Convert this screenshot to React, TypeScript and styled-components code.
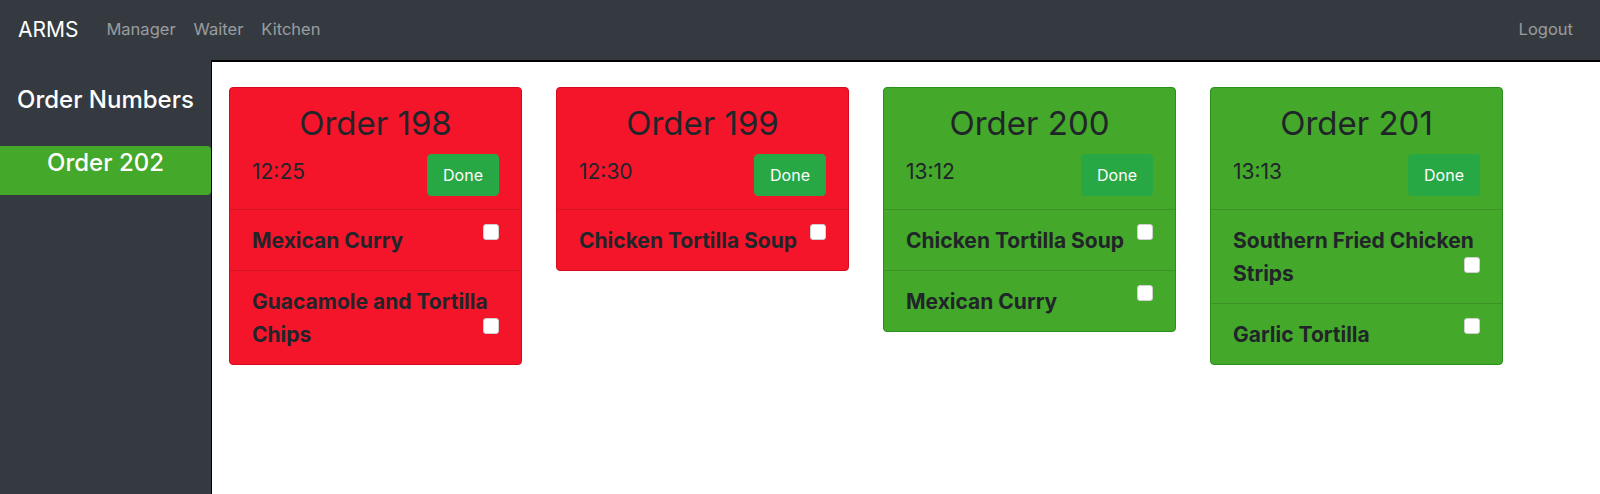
import React from 'react';
import styled, { createGlobalStyle } from 'styled-components';

type Status = 'late' | 'ok';

interface IOrder {
  id: number;
  time: string;
  status: Status;
  items: string[];
}

const orders: IOrder[] = [
  { id: 198, time: '12:25', status: 'late', items: ['Mexican Curry', 'Guacamole and Tortilla Chips'] },
  { id: 199, time: '12:30', status: 'late', items: ['Chicken Tortilla Soup'] },
  { id: 200, time: '13:12', status: 'ok', items: ['Chicken Tortilla Soup', 'Mexican Curry'] },
  { id: 201, time: '13:13', status: 'ok', items: ['Southern Fried Chicken Strips', 'Garlic Tortilla'] },
];

const palette = {
  late: { bg: '#f4152b', border: '#d60a1f' },
  ok: { bg: '#44a82a', border: '#2a8f1c' },
};

const GlobalStyle = createGlobalStyle`
  html, body {
    margin: 0;
    padding: 0;
    background: #343a40;
  }
  body {
    font-family: Inter, "Noto Sans", sans-serif;
    color: #212529;
  }
`;

const App: React.FC = () => (
  <Page>
    <GlobalStyle />
    <Navbar>
      <Brand>ARMS</Brand>
      <NavLink>Manager</NavLink>
      <NavLink>Waiter</NavLink>
      <NavLink>Kitchen</NavLink>
      <NavSpacer />
      <NavLink>Logout</NavLink>
    </Navbar>
    <Body>
      <Sidebar>
        <SidebarTitle>Order Numbers</SidebarTitle>
        <SidebarOrder>Order 202</SidebarOrder>
      </Sidebar>
      <Main>
        {orders.map((order) => (
          <Card key={order.id} status={order.status}>
            <CardHeader>
              <OrderTitle>Order {order.id}</OrderTitle>
              <HeaderRow>
                <OrderTime>{order.time}</OrderTime>
                <DoneButton>Done</DoneButton>
              </HeaderRow>
            </CardHeader>
            {order.items.map((item) => (
              <ItemRow key={item}>
                {item}
                <ItemCheck type="checkbox" />
              </ItemRow>
            ))}
          </Card>
        ))}
      </Main>
    </Body>
  </Page>
);

export default App;

const Page = styled.div`
  min-height: 100vh;
  display: flex;
  flex-direction: column;
`;

const Navbar = styled.nav`
  height: 60px;
  box-sizing: border-box;
  display: flex;
  align-items: center;
  padding: 0 18px 2px 18px;
  background: #343a40;
`;

const Brand = styled.span`
  color: #fff;
  font-size: 21px;
  margin-right: 19px;
`;

const NavLink = styled.span`
  color: rgba(255, 255, 255, 0.5);
  font-size: 16.5px;
  padding: 0 9px;
`;

const NavSpacer = styled.div`
  flex: 1;
`;

const Body = styled.div`
  flex: 1;
  display: flex;
`;

const Sidebar = styled.aside`
  width: 211px;
  flex-shrink: 0;
  background: #343a40;
  color: #fff;
`;

const SidebarTitle = styled.h4`
  margin: 25px 0 0 17px;
  font-size: 24px;
  font-weight: 500;
  line-height: 29px;
`;

const SidebarOrder = styled.div`
  margin-top: 32px;
  height: 49px;
  box-sizing: border-box;
  padding-top: 2px;
  background: #44a82a;
  border-radius: 0 4px 4px 0;
  text-align: center;
  font-size: 24px;
  font-weight: 500;
  line-height: 29px;
`;

const Main = styled.main`
  flex: 1;
  background: #fff;
  border-top: 2px solid #000;
  border-left: 1px solid #000;
  padding: 25px 17px;
  display: flex;
  align-items: flex-start;
  gap: 34px;
`;

const Card = styled.section<{ status: Status }>`
  width: 293px;
  box-sizing: border-box;
  background: ${(p) => palette[p.status].bg};
  border: 1px solid ${(p) => palette[p.status].border};
  border-radius: 4px;
`;

const CardHeader = styled.div`
  padding: 16px 22px 13px;
`;

const OrderTitle = styled.h2`
  margin: 0;
  text-align: center;
  font-size: 33px;
  font-weight: 400;
  line-height: 38px;
`;

const HeaderRow = styled.div`
  margin-top: 12px;
  display: flex;
  align-items: center;
  justify-content: space-between;
`;

const OrderTime = styled.span`
  font-size: 21px;
  margin-top: -8px;
`;

const DoneButton = styled.button`
  width: 72px;
  height: 42px;
  border: 1px solid #28a745;
  border-radius: 4px;
  background: #28a745;
  color: #fff;
  font-family: inherit;
  font-size: 16px;
  padding: 0;
`;

const ItemRow = styled.div`
  padding: 14px 22px 13px;
  border-top: 1px solid rgba(0, 0, 0, 0.125);
  font-size: 21px;
  font-weight: 700;
  line-height: 33px;
`;

const ItemCheck = styled.input`
  float: right;
  width: 16px;
  height: 16px;
  margin: 0 0 0 8px;
  appearance: none;
  background: #fff;
  border: 1px solid #d0d0d0;
  border-radius: 3px;
`;
